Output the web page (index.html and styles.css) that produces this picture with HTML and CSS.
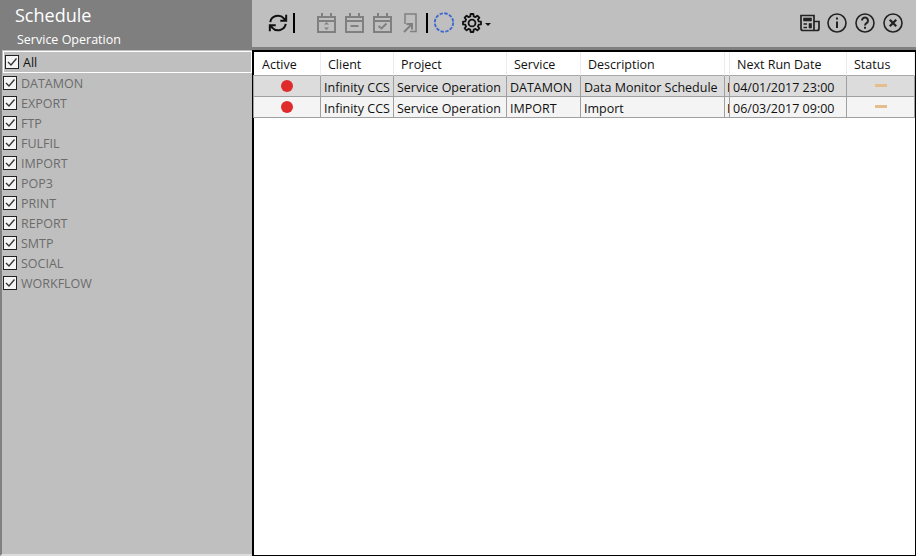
FILE: index.html
```html
<!DOCTYPE html>
<html lang="en">
<head>
<meta charset="utf-8">
<title>Schedule</title>
<link rel="stylesheet" href="styles.css">
</head>
<body>
<div class="app">
  <aside class="side">
    <header class="side-head">
      <div class="side-title">Schedule</div>
      <div class="side-sub">Service Operation</div>
    </header>
    <ul class="filters">
      <li class="filter all"><svg class="check" viewBox="0 0 14 14"><use href="#chk"/></svg><span>All</span></li>
      <li class="filter"><svg class="check" viewBox="0 0 14 14"><use href="#chk"/></svg><span>DATAMON</span></li>
      <li class="filter"><svg class="check" viewBox="0 0 14 14"><use href="#chk"/></svg><span>EXPORT</span></li>
      <li class="filter"><svg class="check" viewBox="0 0 14 14"><use href="#chk"/></svg><span>FTP</span></li>
      <li class="filter"><svg class="check" viewBox="0 0 14 14"><use href="#chk"/></svg><span>FULFIL</span></li>
      <li class="filter"><svg class="check" viewBox="0 0 14 14"><use href="#chk"/></svg><span>IMPORT</span></li>
      <li class="filter"><svg class="check" viewBox="0 0 14 14"><use href="#chk"/></svg><span>POP3</span></li>
      <li class="filter"><svg class="check" viewBox="0 0 14 14"><use href="#chk"/></svg><span>PRINT</span></li>
      <li class="filter"><svg class="check" viewBox="0 0 14 14"><use href="#chk"/></svg><span>REPORT</span></li>
      <li class="filter"><svg class="check" viewBox="0 0 14 14"><use href="#chk"/></svg><span>SMTP</span></li>
      <li class="filter"><svg class="check" viewBox="0 0 14 14"><use href="#chk"/></svg><span>SOCIAL</span></li>
      <li class="filter"><svg class="check" viewBox="0 0 14 14"><use href="#chk"/></svg><span>WORKFLOW</span></li>
    </ul>
  </aside>
  <main class="main">
    <div class="toolbar">
      <svg class="ic refresh" viewBox="0 0 22 22" fill="none" stroke="#111" stroke-width="2.200"><path d="M2.500 10a8.500 8 0 0 1 15-4L20 8.500M20 2v6.500h-6.500"/><path d="M19.500 12a8.500 8 0 0 1-15 4L2 13.500M2 20v-6.500h6.500"/></svg>
      <i class="sep first"></i>
      <svg class="ic cal" viewBox="0 0 20 20" fill="none" stroke="#808080" stroke-width="2"><use href="#calbase"/><path d="M10.500 9l-2.500 2.500h5zM10.500 17l-2.500-2.500h5z" fill="#808080" stroke="none"/></svg>
      <svg class="ic cal" viewBox="0 0 20 20" fill="none" stroke="#808080" stroke-width="2"><use href="#calbase"/><path d="M6.500 13h8"/></svg>
      <svg class="ic cal" viewBox="0 0 20 20" fill="none" stroke="#808080" stroke-width="2"><use href="#calbase"/><path d="M6.500 13l3 2.500 5-5"/></svg>
      <svg class="ic doc" viewBox="0 0 14 20" fill="none" stroke="#808080"><path d="M2 11V1h11v17.500H7" stroke-width="1.500"/><path d="M1 19l7.500-7.500M3.500 11H9v5.500" stroke-width="2"/></svg>
      <i class="sep"></i>
      <svg class="ic spin" viewBox="0 0 22 22" fill="none"><circle cx="11" cy="10.500" r="9.200" stroke="#3f68d0" stroke-width="1.900" stroke-dasharray="3.400 1.420"/></svg>
      <svg class="ic gear" viewBox="0 0 22 22" fill="none" stroke="#111" stroke-width="2" stroke-linejoin="round"><path d="M9.160 3.630L9.440 1.120H12.560L12.840 3.630L14.910 4.490L16.880 2.910L19.090 5.120L17.510 7.090L18.370 9.160L20.880 9.440V12.560L18.370 12.840L17.510 14.910L19.090 16.880L16.880 19.090L14.910 17.510L12.840 18.370L12.560 20.880H9.440L9.160 18.370L7.090 17.510L5.120 19.090L2.910 16.880L4.490 14.910L3.630 12.840L1.120 12.560V9.440L3.630 9.160L4.490 7.090L2.910 5.120L5.120 2.910L7.090 4.490Z"/><circle cx="11" cy="11" r="3.800"/></svg>
      <i class="caret"></i>
      <div class="spacer"></div>
      <svg class="ic news" viewBox="0 0 20 20" fill="none" stroke="#222" stroke-width="1.700"><path d="M1 2.500h13v15H3a2 2 0 0 1-2-2zM14 8.500h5v7a2 2 0 0 1-2 2h-3"/><path d="M3.500 5h8v3h-8zM9 10.500h2.500v4.500H9z" fill="#222" stroke-width=".6"/><path d="M3.500 11h3.500M3.500 14.500h3.500" stroke-width="1.500"/></svg>
      <svg class="ic round" viewBox="0 0 20 20" fill="none" stroke="#222" stroke-width="1.600"><circle cx="10" cy="10" r="9"/><path d="M10 8.500V15M10 4.500v2" stroke-width="2"/></svg>
      <svg class="ic round" viewBox="0 0 20 20" fill="none" stroke="#222" stroke-width="1.600"><circle cx="10" cy="10" r="9"/><path d="M7 7.500a3 3 0 1 1 4.500 2.600c-1 .6-1.500 1-1.500 2.400M10 13.800v2" stroke-width="2"/></svg>
      <svg class="ic round" viewBox="0 0 20 20" fill="none" stroke="#222" stroke-width="1.600"><circle cx="10" cy="10" r="9"/><path d="M6.800 6.800l6.400 6.400M13.200 6.800l-6.400 6.400" stroke-width="2.300"/></svg>
    </div>
    <div class="panel">
      <table class="grid">
        <colgroup>
          <col class="c1"><col class="c2"><col class="c3"><col class="c4"><col class="c5"><col class="c6"><col class="c7"><col class="c8">
        </colgroup>
        <thead>
          <tr><th>Active</th><th>Client</th><th>Project</th><th>Service</th><th>Description</th><th></th><th>Next Run Date</th><th>Status</th></tr>
        </thead>
        <tbody>
          <tr class="odd"><td class="center"><i class="dot"></i></td><td>Infinity CCS</td><td>Service Operation</td><td>DATAMON</td><td>Data Monitor Schedule</td><td class="cut">I</td><td>04/01/2017 23:00</td><td class="center"><i class="dash"></i></td></tr>
          <tr class="even"><td class="center"><i class="dot"></i></td><td>Infinity CCS</td><td>Service Operation</td><td>IMPORT</td><td>Import</td><td class="cut">I</td><td>06/03/2017 09:00</td><td class="center"><i class="dash"></i></td></tr>
        </tbody>
      </table>
    </div>
  </main>
</div>
<svg class="defs" aria-hidden="true">
  <defs>
    <g id="chk"><rect x="0.500" y="0.500" width="13" height="13" fill="#f4f4f4" stroke="#222"/><path d="M3 7l3 3 5.500-6.500" fill="none" stroke="#333" stroke-width="1.300"/></g>
    <g id="calbase"><path d="M2 4h17v15H2zM2 8h17M6 0v4M15 0v4"/></g>
  </defs>
</svg>
</body>
</html>
```
FILE: styles.css
```css
* { box-sizing: border-box; }
html, body { margin: 0; height: 100%; }
body { width: 916px; height: 556px; overflow: hidden; font-family: "Open Sans", "Noto Sans", sans-serif; font-size: 12.5px; background: #bfbfbf; color: #111; }
.defs { width: 0; height: 0; display: block; overflow: hidden; }
.app { display: flex; width: 916px; height: 556px; }
.side { width: 252px; height: 556px; display: flex; flex-direction: column; background: #bfbfbf; border-left: 2px solid #808080; border-bottom: 2px solid #dcdcdc; }
.side-head { height: 50px; margin-left: -2px; background: #7f7f7f; color: #fff; padding: 3px 0 0 15px; }
.side-title { font-size: 18px; line-height: 25px; }
.side-sub { font-size: 12.5px; line-height: 18px; padding: 3px 0 0 2px; }
.filters { list-style: none; margin: 0; padding: 0 0 0 1px; flex: 1; }
.filter { display: flex; align-items: center; height: 20px; gap: 4px; color: #6b6b6b; }
.filter.all { height: 22px; margin: 1px 0 0 0; padding-left: 1px; gap: 4px; border: 1px solid #fff; color: #111; }
.check { width: 14px; height: 14px; flex: none; }
.main { width: 664px; display: flex; flex-direction: column; }
.toolbar { height: 50px; flex: none; display: flex; align-items: center; padding: 0 13px 1px 16px; border-bottom: 3px solid #808080; background: #bfbfbf; }
.ic { display: block; flex: none; }
.refresh { width: 20px; height: 20px; }
.sep { width: 2px; height: 20px; background: #000; flex: none; }
.sep.first { margin: 0 21px 0 5px; }
.cal { width: 20px; height: 20px; margin-right: 8px; }
.doc { width: 14px; height: 20px; margin: 0 9px 0 3px; }
.spin { width: 22px; height: 22px; margin: 0 7px 0 5px; }
.gear { width: 20px; height: 20px; }
.caret { width: 0; height: 0; margin: 2px 0 0 3px; border: 3px solid transparent; border-top-color: #111; border-bottom: 0; flex: none; }
.spacer { flex: 1; }
.news { width: 20px; height: 20px; margin-right: 7px; }
.round { width: 20px; height: 20px; margin-right: 8px; }
.round:last-child { margin-right: 0; }
.panel { flex: 1; background: #fff; border: 2px solid #000; border-right: 1px solid #000; border-bottom: 1px solid #000; }
.grid { border-collapse: separate; border-spacing: 0; table-layout: fixed; width: 662px; margin-left: -1px; position: relative; }
.c1 { width: 68px; } .c2 { width: 73px; } .c3 { width: 113px; } .c4 { width: 74px; }
.c5 { width: 144px; } .c6 { width: 5px; } .c7 { width: 117px; } .c8 { width: 68px; }
th { height: 24px; padding: 2px 0 0 7px; font-weight: 400; text-align: left; white-space: nowrap; overflow: hidden; border-right: 1px solid #ececec; border-bottom: 1px solid #a8a8a8; }
th:first-child { padding-left: 9px; }
td { height: 21px; padding: 2px 0 0 3px; white-space: nowrap; overflow: hidden; border-right: 1px solid #a0a0a0; border-bottom: 1px solid #a0a0a0; }
td:first-child { border-left: 1px solid #a0a0a0; }
td.cut { padding-left: 2px; color: #000; }
td.center { padding: 0; text-align: center; }
.odd td { background: #dcdcdc; }
.even td { background: #f4f4f4; }
.dot { display: block; width: 12px; height: 12px; margin: -1px auto 0; border-radius: 50%; background: #e02b2b; }
.dash { display: block; width: 12px; height: 3px; margin: -2px auto 0; background: #e6bd8f; }
```
